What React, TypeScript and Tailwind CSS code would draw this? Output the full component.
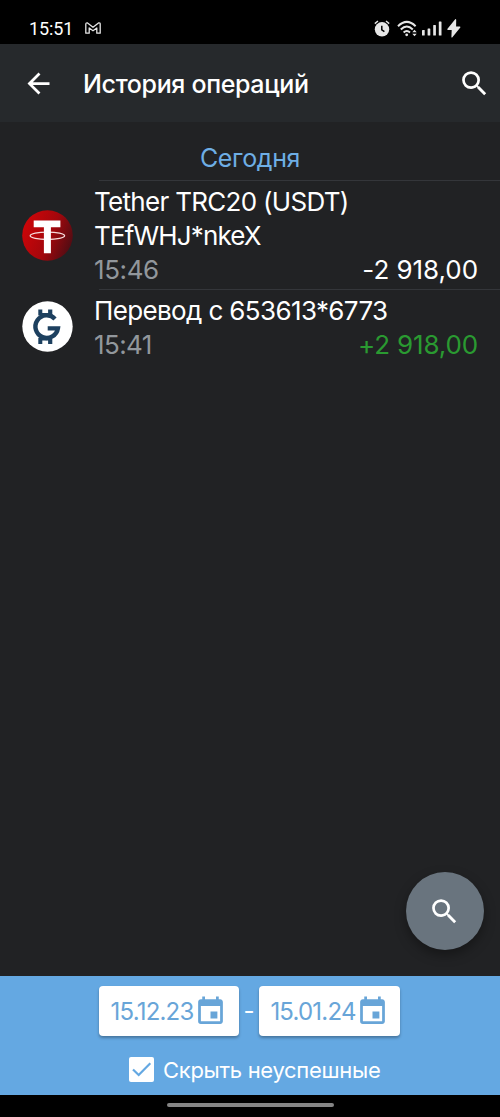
import React from "react";
import { MdArrowBack, MdEvent, MdSearch } from "react-icons/md";

const StatusBar = () => {
  return (
    <div className="flex h-11 shrink-0 items-center justify-between bg-black pt-[14px] pr-[39px] pl-[29px] text-[#e6e6e6]">
      <div className="flex items-center gap-[12px]">
        <span className="w-[44px] font-[Roboto] text-[18px] leading-[20px] tracking-[-0.1px] whitespace-nowrap text-white">15:51</span>
        <svg width="16" height="12" viewBox="0 0 16 12" fill="none" stroke="currentColor" strokeWidth="1.3" strokeLinejoin="round" className="-mt-[2px]">
          <path d="M.8 11.2V2Q.9.7 2.2.8L8 5.3 13.8.8Q15.1.7 15.2 2v9.2h-3.4V6L8 8.8 4.2 6v5.2z" />
        </svg>
      </div>
      <div className="flex items-center">
        <svg width="16" height="17" viewBox="0 0 16 17" className="-mt-[2px] mr-[7px]">
          <circle cx="8" cy="9.3" r="7.2" fill="currentColor" />
          <path d="M.8 3.6 4 1M15.2 3.6 12 1" stroke="currentColor" strokeWidth="1.4" />
          <path d="M7.8 5.8v4l2.6 1.8" stroke="#000" strokeWidth="1.5" fill="none" />
        </svg>
        <svg width="21" height="17" viewBox="0 0 21 17" fill="none" stroke="currentColor" strokeWidth="2" className="-mt-[2px] mr-[4px]">
          <path d="M1 6.2Q9.8-2.4 18.6 6.2M3.8 9.5Q9.8 3.6 15.8 9.5M6.6 12.5Q9.8 9.6 13 12.5" />
          <circle cx="9.7" cy="14.8" r="1.4" fill="currentColor" stroke="none" />
          <path d="m15.3 12.3 2.2-2.6 2.2 2.6zM15.3 13.7l2.2 2.6 2.2-2.6z" fill="currentColor" stroke="none" />
        </svg>
        <svg width="20" height="15" viewBox="0 0 20 15" fill="currentColor" className="-mt-[1px] mr-[5px]">
          <rect x="0" y="9" width="2.7" height="5.5" rx=".6" />
          <rect x="5.6" y="7.5" width="2.7" height="7" rx=".6" />
          <rect x="11.2" y="4" width="2.7" height="10.5" rx=".6" />
          <rect x="16.8" y=".5" width="2.7" height="14" rx=".6" />
        </svg>
        <svg width="14" height="19" viewBox="0 0 14 19" fill="currentColor" className="-mt-[2px]">
          <path d="M8.2.3.5 9.8q-.4 1.2.6 1.2h3.6L4.4 18.2q.3.6.8.2L13.3 8.6q.4-1.2-.6-1.2H9.1L9.2.7Q8.8-.2 8.2.3z" />
        </svg>
      </div>
    </div>
  );
};

const TetherIcon = () => (
  <svg width="51" height="51" viewBox="0 0 51 51">
    <defs>
      <linearGradient id="tether" x1="0" y1="0.3" x2="1" y2="0.7">
        <stop offset="0" stopColor="#cf0508" />
        <stop offset="0.55" stopColor="#a3070c" />
        <stop offset="1" stopColor="#4c0d14" />
      </linearGradient>
    </defs>
    <circle cx="25.5" cy="25.5" r="25.3" fill="url(#tether)" />
    <ellipse cx="25.4" cy="25.8" rx="17.2" ry="3.7" fill="none" stroke="#f6dada" strokeWidth="1.3" />
    <path d="M11.7 10.5H38.4V17.2H28.9V43.3H21.9V17.2H11.7z" fill="#fff" />
  </svg>
);

const CoinIcon = () => (
  <svg width="51" height="51" viewBox="0 0 51 51">
    <circle cx="25.5" cy="25.5" r="25.2" fill="#fff" />
    <path d="M33 17.9A11.3 11.3 0 1 0 35.9 27.4H25.7" fill="none" stroke="#1d405f" strokeWidth="4.4" />
    <path d="M16.3 8.5h4v3.4h5.8V8.5h4.2v6h-14zM16.3 43h4v-3.4h5.8V43h4.2v-6h-14z" fill="#1d405f" />
  </svg>
);

const DateField = ({ value, className, textClass }: { value: string; className: string; textClass: string }) => {
  return (
    <button className={`flex h-[50px] items-center rounded-[4px] bg-white pl-[11px] text-[#68a5d8] shadow-[0_2px_3px_rgba(0,0,0,0.3)] ${className}`}>
      <span className={`text-[24px] whitespace-nowrap ${textClass}`}>{value}</span>
      <MdEvent size={33} className="shrink-0" />
    </button>
  );
};

const App = () => {
  return (
    <div className="flex h-[1117px] w-[500px] flex-col overflow-hidden bg-[#212224] font-[Inter,sans-serif] text-white">
      <StatusBar />

      <header className="flex h-[78px] shrink-0 items-center bg-[#26292c] pr-[9px] pl-[22px]">
        <MdArrowBack size={33} />
        <h1 className="ml-[28px] flex-1 pt-[4px] text-[25px] font-medium tracking-[-0.35px] whitespace-nowrap">История операций</h1>
        <MdSearch size={33} />
      </header>

      <main className="flex flex-1 flex-col">
        <h2 className="flex h-[58px] items-center justify-center pt-[13px] text-[25px] leading-[34px] tracking-[-0.35px] text-[#6eaee5]">Сегодня</h2>

        <div className="flex pl-[22px]">
          <div className="flex w-[72px] items-center pt-[2px]">
            <TetherIcon />
          </div>
          <div className="flex-1">
            <div className="ml-[5px] h-px bg-[#34363a]" />
            <div className="h-[108px] pt-[4px] pr-[22px] text-[26px] leading-[34px] whitespace-nowrap">
              <p><span className="tracking-[-0.7px]">Tether TRC20 (USDT)</span></p>
              <p><span className="tracking-[-0.85px]">TEfWHJ*nkeX</span></p>
              <div className="flex justify-between">
                <span className="tracking-[-0.4px] text-[#92979c]">15:46</span>
                <span className="tracking-[-0.05px]">-2 918,00</span>
              </div>
            </div>
          </div>
        </div>

        <div className="flex pl-[22px]">
          <div className="flex w-[72px] items-center">
            <CoinIcon />
          </div>
          <div className="flex-1">
            <div className="ml-[5px] h-px bg-[#34363a]" />
            <div className="h-[74px] pt-[4px] pr-[22px] text-[26px] leading-[34px] whitespace-nowrap">
              <p><span className="tracking-[-0.63px]">Перевод с 653613*6773</span></p>
              <div className="flex justify-between">
                <span className="tracking-[-0.6px] text-[#92979c]">15:41</span>
                <span className="tracking-[-0.15px] text-[#2a9a31]">+2 918,00</span>
              </div>
            </div>
          </div>
        </div>

        <div className="mt-auto flex justify-end pr-[16px] pb-[26px]">
          <button className="flex size-[78px] items-center justify-center rounded-full bg-[#69747e] pr-[2px] shadow-[0_5px_12px_rgba(0,0,0,0.35)]">
            <MdSearch size={33} />
          </button>
        </div>
      </main>

      <footer className="flex h-[119px] shrink-0 flex-col bg-[#64a8e2] pt-[10px]">
        <div className="flex items-center pl-[99px]">
          <DateField value="15.12.23" className="w-[140px]" textClass="w-[84px] pt-[2px] tracking-[-0.8px]" />
          <span className="w-[20px] text-center text-[24px]">-</span>
          <DateField value="15.01.24" className="w-[141px]" textClass="w-[86px] pt-[2px] tracking-[-0.8px]" />
        </div>
        <label className="mt-[19px] flex items-center pl-[129px]">
          <svg width="25" height="25" viewBox="0 0 25 25" className="-mt-[2px]">
            <rect width="25" height="25" rx="2" fill="#fff" />
            <path d="m4 12.5 5.7 5.5L21.3 6.3" fill="none" stroke="#64a8e2" strokeWidth="2.2" />
          </svg>
          <span className="ml-[9px] text-[22px] leading-[30px] tracking-[-0.3px] whitespace-nowrap">Скрыть неуспешные</span>
        </label>
      </footer>

      <div className="flex h-[22px] shrink-0 items-center justify-center bg-black">
        <div className="-mt-[2px] h-[4px] w-[167px] rounded-full bg-[#858585]" />
      </div>
    </div>
  );
};

export default App;
